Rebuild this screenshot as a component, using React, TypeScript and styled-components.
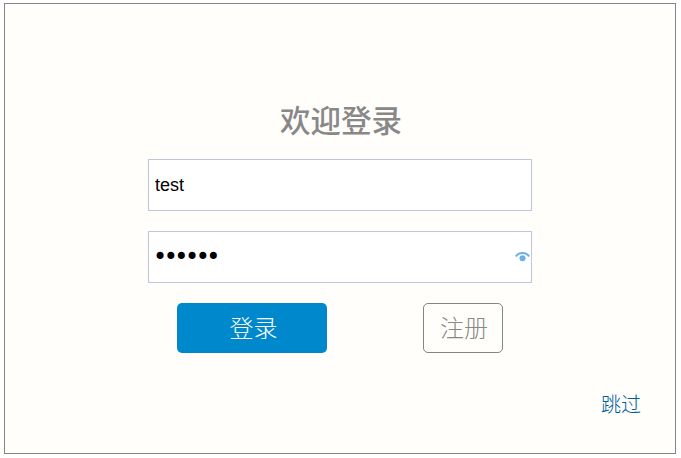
import { useState } from "react";
import styled, { createGlobalStyle } from "styled-components";

const CJK_FONT = `"Liberation Sans", "Noto Sans CJK SC", sans-serif`;

const App = () => {
  const [username, setUsername] = useState("test");
  const [password, setPassword] = useState("123456");

  return (
    <>
      <GlobalStyle />
      <Frame>
        <Title>欢迎登录</Title>
        <Form>
          <Field>
            <Input value={username} onChange={(e) => setUsername(e.target.value)} />
          </Field>
          <Field>
            <PasswordInput
              type="password"
              value={password}
              onChange={(e) => setPassword(e.target.value)}
            />
            <EyeIcon viewBox="0 0 15 11" aria-hidden="true">
              <path
                d="M0.9 5.4 C3.6 0.9 11.4 0.9 14.1 5.4"
                fill="none"
                stroke="#6fb0e4"
                strokeWidth="2"
              />
              <circle cx="7.5" cy="7.2" r="3" fill="#6fb0e4" />
            </EyeIcon>
          </Field>
          <Actions>
            <LoginButton type="button">登录</LoginButton>
            <RegisterButton type="button">注册</RegisterButton>
          </Actions>
        </Form>
        <Footer>
          <SkipLink href="#">跳过</SkipLink>
        </Footer>
      </Frame>
    </>
  );
};

const GlobalStyle = createGlobalStyle`
  html, body {
    margin: 0;
    padding: 0;
    background: #fff;
  }
  * {
    box-sizing: border-box;
  }
`;
const Frame = styled.main`
  width: 672px;
  height: 451px;
  margin: 3px 0 0 4px;
  padding-top: 99px;
  border: 1px solid #858585;
  background-color: #fffefb;
  display: flex;
  flex-direction: column;
  align-items: center;
  font-family: ${CJK_FONT};
`;
const Title = styled.h1`
  margin: 0 0 19px;
  padding-left: 2px;
  height: 37px;
  line-height: 37px;
  font-size: 30.5px;
  font-weight: 500;
  color: #888;
`;
const Form = styled.form`
  width: 384px;
  display: flex;
  flex-direction: column;
  gap: 20px;
`;
const Field = styled.div`
  position: relative;
  height: 52px;
`;
const Input = styled.input`
  display: block;
  width: 100%;
  height: 100%;
  padding: 0 6px;
  border: 1px solid #bec6da;
  border-radius: 0;
  outline: none;
  background: #fff;
  color: #000;
  font-family: "Liberation Sans", sans-serif;
  font-size: 18px;
`;
const PasswordInput = styled(Input)`
  padding-left: 4px;
  font-family: "DejaVu Sans", sans-serif;
  font-size: 24px;
  letter-spacing: -3.5px;
`;
const EyeIcon = styled.svg`
  position: absolute;
  top: 20px;
  right: 2px;
  width: 15px;
  height: 11px;
`;
const Actions = styled.div`
  display: flex;
  justify-content: space-between;
  padding: 0 29px;
`;
const LoginButton = styled.button`
  width: 150px;
  height: 50px;
  padding: 0 0 4px 3px;
  border: none;
  border-radius: 5px;
  background-color: #0088cc;
  color: #fff;
  font-family: ${CJK_FONT};
  font-size: 24px;
  font-weight: 300;
`;
const RegisterButton = styled.button`
  width: 80px;
  height: 50px;
  padding: 0 0 4px 2px;
  border: 1px solid #858585;
  border-radius: 5px;
  background: transparent;
  color: #888;
  font-family: ${CJK_FONT};
  font-size: 24px;
  font-weight: 300;
`;
const Footer = styled.div`
  align-self: stretch;
  display: flex;
  justify-content: flex-end;
  margin-top: 38px;
  padding-right: 34px;
`;
const SkipLink = styled.a`
  color: #005f99;
  font-size: 20px;
  font-weight: 300;
  line-height: 28px;
  text-decoration: none;
`;

export default App;
